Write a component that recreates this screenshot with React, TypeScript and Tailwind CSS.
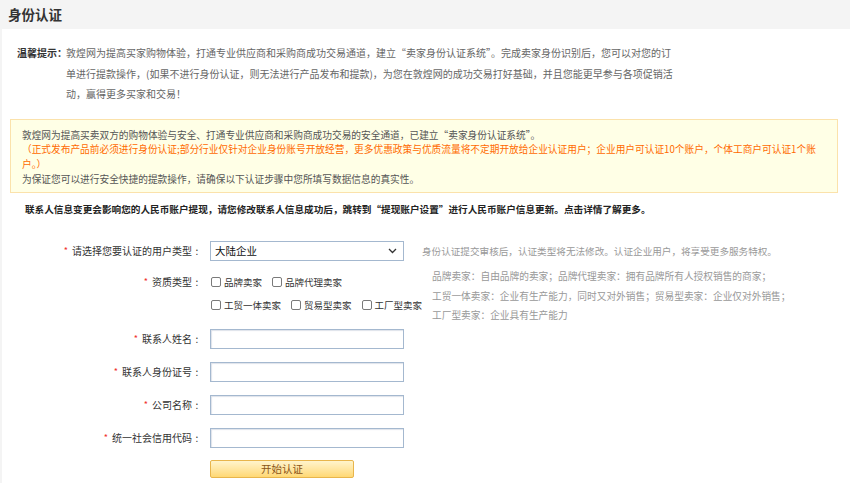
import React from "react";

const FONT = '"Noto Sans CJK SC", "Liberation Sans", sans-serif';

function Label({ text }: { text: string }) {
  return (
    <div className="w-[200px] shrink-0 flex justify-end items-center text-[10px] text-[#333] leading-[20px] h-[20px] whitespace-nowrap">
      <span className="text-[#f02b2b] text-[9px] mr-[4px]">*</span>
      <span>{text}</span>
      <span className="inline-block w-[10px] text-center">:</span>
    </div>
  );
}

function Input() {
  return (
    <div className="ml-[8px] w-[194px] h-[20px] bg-white border border-[#a4b8cf] shadow-[inset_1px_1px_1px_rgba(120,140,170,0.25)]" />
  );
}

function Check({ text }: { text: string }) {
  return (
    <div className="flex items-center mr-[10px] h-[20px]">
      <span className="w-[10px] h-[10px] border border-[#7a7a7a] rounded-[2px] bg-white mr-[3px]" />
      <span className="text-[9.5px] text-[#333] whitespace-nowrap">{text}</span>
    </div>
  );
}

export default function App() {
  return (
    <div className="w-[850px] h-[483px] bg-[#f4f4f4] overflow-hidden" style={{ fontFamily: FONT }}>
      <div className="h-[29px] flex items-center pl-[8px] text-[13.5px] font-bold text-[#333]">身份认证</div>
      <div className="ml-[2px] bg-white h-[454px] pt-[14px]">
        {/* tip */}
        <div className="flex text-[10px] leading-[20.5px] whitespace-nowrap">
          <div className="ml-[15px] w-[49px] font-bold text-[#333]">温馨提示：</div>
          <div className="text-[#666]">
            敦煌网为提高买家购物体验，打通专业供应商和采购商成功交易通道，建立“卖家身份认证系统”。完成卖家身份识别后，您可以对您的订
            <br />
            单进行提款操作，(如果不进行身份认证，则无法进行产品发布和提款)，为您在敦煌网的成功交易打好基础，并且您能更早参与各项促销活
            <br />
            动，赢得更多买家和交易！
          </div>
        </div>

        {/* yellow box */}
        <div className="mt-[14px] ml-[8px] w-[828px] border border-[#fbe2ab] bg-[#ffffe6] pt-[8px] pb-[6px] px-[11px] text-[9.7px] leading-[14.7px] whitespace-nowrap">
          <div className="text-[#555]">敦煌网为提高买卖双方的购物体验与安全、打通专业供应商和采购商成功交易的安全通道，已建立“卖家身份认证系统”。</div>
          <div className="text-[#ff6a00]">
            （正式发布产品前必须进行身份认证;部分行业仅针对企业身份账号开放经营，更多优惠政策与优质流量将不定期开放给企业认证用户；企业用户可认证10个账户，个体工商户可认证1个账
            <br />
            户。）
          </div>
          <div className="text-[#555]">为保证您可以进行安全快捷的提款操作，请确保以下认证步骤中您所填写数据信息的真实性。</div>
        </div>

        {/* notice */}
        <div className="mt-[9px] ml-[23px] text-[9.65px] leading-[14px] font-bold text-[#222] whitespace-nowrap">
          联系人信息变更会影响您的人民币账户提现，请您修改联系人信息成功后，跳转到“提现账户设置”进行人民币账户信息更新。点击详情了解更多。
        </div>

        {/* form */}
        <div className="mt-[25px]">
          <div className="flex items-center h-[20px]">
            <Label text="请选择您要认证的用户类型" />
            <div className="ml-[8px] w-[194px] h-[20px] bg-white border border-[#a4b8cf] flex items-center justify-between pl-[4px] pr-[6px]">
              <span className="text-[10.5px] text-[#111]">大陆企业</span>
              <svg width="9" height="6" viewBox="0 0 9 6" fill="none">
                <path d="M1 1l3.5 3.5L8 1" stroke="#333" strokeWidth="1.3" />
              </svg>
            </div>
            <div className="ml-[18px] text-[9.6px] text-[#999] whitespace-nowrap">
              身份认证提交审核后，认证类型将无法修改。认证企业用户，将享受更多服务特权。
            </div>
          </div>

          <div className="flex items-start h-[43px] mt-[11px]">
            <Label text="资质类型" />
            <div className="ml-[9px] flex flex-col gap-[3px]">
              <div className="flex">
                <Check text="品牌卖家" />
                <Check text="品牌代理卖家" />
              </div>
              <div className="flex">
                <Check text="工贸一体卖家" />
                <Check text="贸易型卖家" />
                <Check text="工厂型卖家" />
              </div>
            </div>
            <div className="-mt-[5px] text-[9.7px] leading-[19.5px] text-[#999] whitespace-nowrap">
              品牌卖家：自由品牌的卖家；品牌代理卖家：拥有品牌所有人授权销售的商家；
              <br />
              工贸一体卖家：企业有生产能力，同时又对外销售；贸易型卖家：企业仅对外销售；
              <br />
              工厂型卖家：企业具有生产能力
            </div>
          </div>

          <div className="flex items-center mt-[14px]">
            <Label text="联系人姓名" />
            <Input />
          </div>
          <div className="flex items-center mt-[13px]">
            <Label text="联系人身份证号" />
            <Input />
          </div>
          <div className="flex items-center mt-[13px]">
            <Label text="公司名称" />
            <Input />
          </div>
          <div className="flex items-center mt-[13px]">
            <Label text="统一社会信用代码" />
            <Input />
          </div>
          <div className="flex mt-[12px]">
            <div className="w-[200px]" />
            <button className="ml-[8px] w-[144px] h-[18px] border border-[#e8b54c] rounded-[2px] bg-gradient-to-b from-[#fff4cc] to-[#ffd873] text-[10.5px] leading-[16px] text-[#8a5518]">
              开始认证
            </button>
          </div>
        </div>
      </div>
    </div>
  );
}
